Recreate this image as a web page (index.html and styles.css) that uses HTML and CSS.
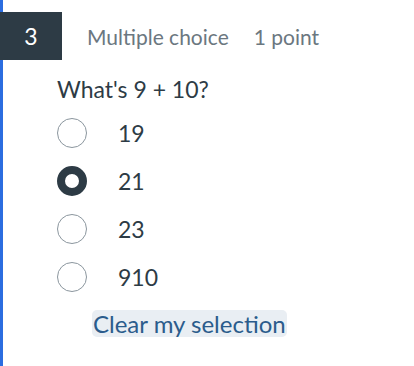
FILE: index.html
```html
<!DOCTYPE html>
<html>
<head>
<meta charset="utf-8">
<link rel="stylesheet" href="styles.css">
</head>
<body>
<div class="question">
  <div class="header">
    <div class="number">3</div>
    <span class="meta">Multiple choice</span>
    <span class="meta">1 point</span>
  </div>
  <div class="body">
    <div class="prompt">What's 9 + 10?</div>
    <div class="options">
      <div class="option"><span class="radio"></span><span class="label">19</span></div>
      <div class="option"><span class="radio checked"></span><span class="label">21</span></div>
      <div class="option"><span class="radio"></span><span class="label">23</span></div>
      <div class="option"><span class="radio"></span><span class="label">910</span></div>
    </div>
    <div class="clear-row"><span class="clear">Clear my selection</span></div>
  </div>
</div>
</body>
</html>
```
FILE: styles.css
```css
html, body {
  margin: 0;
  padding: 0;
  background: #ffffff;
}
body {
  font-family: Lato, "Noto Sans", sans-serif;
  color: #2d3b45;
}
.question {
  border-left: 3px solid #2b6de0;
  height: 366px;
  box-sizing: border-box;
  padding-top: 12px;
}
.header {
  display: flex;
  align-items: center;
  margin-left: -3px;
  gap: 25px;
}
.number {
  width: 62px;
  height: 48px;
  background: #2d3b45;
  color: #ffffff;
  font-size: 23px;
  display: flex;
  align-items: center;
  justify-content: center;
}
.meta {
  font-size: 21px;
  color: #6b7780;
}
.body {
  padding-left: 54px;
}
.prompt {
  font-size: 23px;
  margin-top: 15px;
  line-height: 28px;
}
.options {
  margin-top: 6px;
  display: flex;
  flex-direction: column;
}
.option {
  display: flex;
  align-items: center;
  height: 48px;
}
.radio {
  width: 30px;
  height: 30px;
  box-sizing: border-box;
  border: 1px solid #8b969e;
  border-radius: 50%;
  background: #fff;
}
.radio.checked {
  border: 8px solid #2d3b45;
}
.label {
  font-size: 23px;
  margin-left: 31px;
}
.clear-row {
  margin-top: 9px;
  padding-left: 35px;
}
.clear {
  display: inline-block;
  font-size: 24px;
  line-height: 27px;
  color: #2b5c8c;
  background: #e9eef3;
  border-radius: 5px;
  padding: 0 1px;
}
```
